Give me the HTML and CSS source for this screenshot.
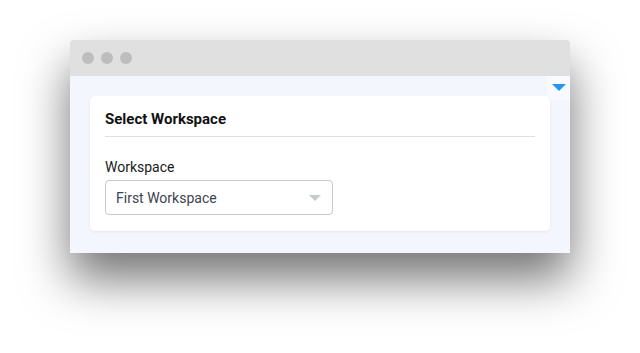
FILE: index.html
```html
<!DOCTYPE html>
<html lang="en">
<head>
    <meta charset="UTF-8">
    <meta name="viewport" content="width=device-width, initial-scale=1.0">
    <title>Select Workspace</title>
    <link rel="stylesheet" href="styles.css">
</head>
<body>

    <div class="window">
        <div class="title-bar">
            <span class="dot"></span>
            <span class="dot"></span>
            <span class="dot"></span>
        </div>
        <div class="window-body">
            <div class="toggle"><span class="toggle-arrow"></span></div>
            <div class="card">
                <h2 class="card-title">Select Workspace</h2>
                <label class="field-label">Workspace</label>
                <div class="select">
                    <span>First Workspace</span>
                    <span class="select-caret"></span>
                </div>
            </div>
        </div>
    </div>

</body>
</html>
```

FILE: styles.css
```css
html, body {
    min-height: 353px;
}

body {
    margin: 0;
    padding: 40px 0 100px 0;
    box-sizing: border-box;
    background: #ffffff;
    font-family: Roboto, "Liberation Sans", Arial, sans-serif;
}

.window {
    width: 500px;
    margin-left: 70px;
    border-radius: 4px 4px 0 0;
    box-shadow: 0 26px 48px rgba(0, 0, 0, 0.55);
}

.title-bar {
    height: 36px;
    background-color: #e0e0e0;
    border-radius: 4px 4px 0 0;
    display: flex;
    align-items: center;
    gap: 7px;
    padding-left: 12px;
}

.dot {
    width: 12px;
    height: 12px;
    border-radius: 50%;
    background-color: #bdbdbd;
}

.window-body {
    position: relative;
    background-color: #f3f6fd;
    padding: 20px 20px 22px 20px;
}

.toggle {
    position: absolute;
    top: 0;
    right: 0;
    width: 23px;
    height: 24px;
    background-color: #f8faff;
    display: flex;
    justify-content: center;
    padding-top: 8px;
    box-sizing: border-box;
}

.toggle-arrow {
    width: 0;
    height: 0;
    border-left: 7px solid transparent;
    border-right: 7px solid transparent;
    border-top: 7px solid #2196f3;
}

.card {
    background-color: #ffffff;
    border-radius: 5px;
    box-shadow: 0 1px 3px rgba(0, 0, 0, 0.08);
    padding: 14px 15px 16px 15px;
}

.card-title {
    margin: 0 0 22px 0;
    padding-bottom: 8px;
    border-bottom: 1px solid #e0e0e0;
    font-size: 15px;
    font-weight: 700;
    color: #111111;
    line-height: 18px;
}

.field-label {
    display: block;
    font-size: 14px;
    color: #1a1a1a;
    line-height: 17px;
    margin-bottom: 4px;
}

.select {
    width: 228px;
    height: 35px;
    box-sizing: border-box;
    border: 1px solid #c5c9d0;
    border-radius: 4px;
    display: flex;
    align-items: center;
    justify-content: space-between;
    padding: 0 11px 0 10px;
    font-size: 14px;
    color: #3b4350;
}

.select-caret {
    width: 0;
    height: 0;
    border-left: 6px solid transparent;
    border-right: 6px solid transparent;
    border-top: 6px solid #c6cad1;
}
```
